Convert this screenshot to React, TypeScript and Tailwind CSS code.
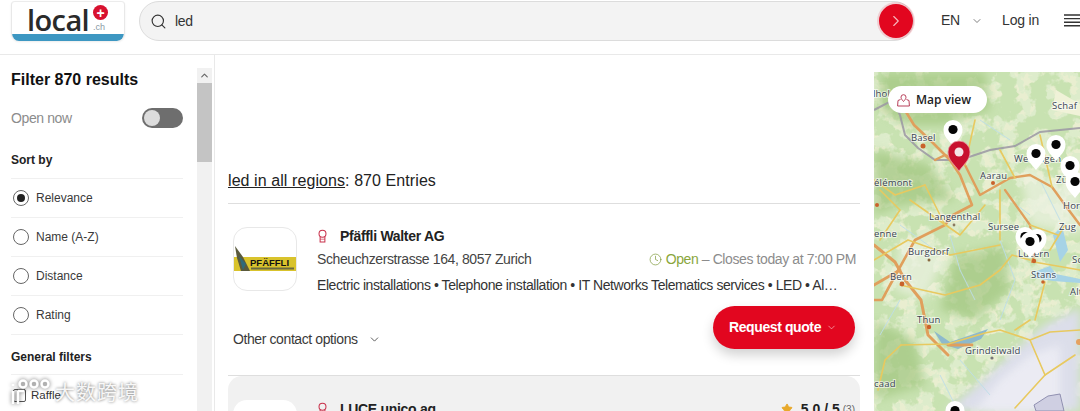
import { Search, ChevronRight, ChevronDown, ChevronUp, Clock, Star } from "lucide-react";

function Ribbon() {
  return (
    <svg width="11" height="14" viewBox="0 0 12 15" fill="none" stroke="#c8304a" strokeWidth="1.1" className="shrink-0">
      <circle cx="6" cy="5" r="3.8" />
      <path d="M3.4 8.2V14H8.6V8.2" />
      <path d="M3.4 11H8.6" strokeWidth="0.7" />
    </svg>
  );
}

function Radio({ label, checked }: { label: string; checked?: boolean }) {
  return (
    <div className="flex h-[39px] items-center gap-[7px] border-t border-[#f0f0f0] pl-[2px] text-[12px] text-[#3a3a3a]">
      <span className="flex h-[16px] w-[16px] items-center justify-center rounded-full border border-[#666]">
        {checked && <span className="h-[8px] w-[8px] rounded-full bg-[#222]" />}
      </span>
      {label}
    </div>
  );
}

function Pin({ x, y }: { x: number; y: number }) {
  return (
    <g transform={`translate(${x} ${y})`}>
      <path d="M0 15C-4 9.5 -9.5 6 -9.5 -1.5A9.5 9.5 0 1 1 9.5 -1.5C9.5 6 4 9.5 0 15Z" fill="#fff" />
      <circle cx="0" cy="-1.5" r="4.6" fill="#050505" />
    </g>
  );
}

const labels: [string, number, number][] = [
  ["lhol", 873, 97],
  ["Basel", 911, 141],
  ["Aarau", 980, 179],
  ["élémont", 874, 186],
  ["Langenthal", 929, 220],
  ["Sursee", 988, 230],
  ["Zug", 1059, 230],
  ["Horg", 1063, 209],
  ["Schaf", 1052, 109],
  ["Wettingen", 1014, 162],
  ["Zürich", 1056, 183],
  ["enne", 874, 237],
  ["Burgdorf", 908, 255],
  ["Luzern", 1018, 257],
  ["Stans", 1031, 278],
  ["Bern", 890, 280],
  ["Thun", 917, 323],
  ["Grindelwald", 965, 354],
  ["Alt", 1070, 295],
  ["Sch", 1072, 263],
  ["caad", 874, 387],
];

function MapArt() {
  return (
    <svg viewBox="874 72 206 339" className="h-[339px] w-[206px]" fontFamily="'Open Sans', sans-serif">
      <defs>
        <filter id="forest" x="0" y="0" width="100%" height="100%">
          <feTurbulence type="fractalNoise" baseFrequency="0.06" numOctaves="4" seed="7" />
          <feColorMatrix values="0 0 0 0 0.58  0 0 0 0 0.76  0 0 0 0 0.44  0 0 0 10 -4.3" />
        </filter>
        <filter id="fields" x="0" y="0" width="100%" height="100%">
          <feTurbulence type="fractalNoise" baseFrequency="0.13" numOctaves="3" seed="21" />
          <feColorMatrix values="0 0 0 0 0.72  0 0 0 0 0.84  0 0 0 0 0.6  0 0 0 9 -3.6" />
        </filter>
        <filter id="snow" x="0" y="0" width="100%" height="100%">
          <feTurbulence type="fractalNoise" baseFrequency="0.1" numOctaves="4" seed="4" />
          <feColorMatrix values="0 0 0 0 0.95  0 0 0 0 0.95  0 0 0 0 0.98  0 0 0 6 -2.9" />
        </filter>
        <filter id="soft">
          <feGaussianBlur stdDeviation="5" />
        </filter>
        <filter id="alpsBlur">
          <feGaussianBlur stdDeviation="4" />
        </filter>
        <filter id="softer">
          <feGaussianBlur stdDeviation="0.35" />
        </filter>
      </defs>
      <rect x="874" y="72" width="206" height="339" fill="#e9eed0" />
      <rect x="874" y="72" width="206" height="339" filter="url(#fields)" />
      <rect x="874" y="72" width="206" height="339" filter="url(#forest)" />
      <g filter="url(#soft)" fill="#9fc47c" opacity="0.65">
        <path d="M880 72H985L990 110L945 125L905 125L880 110Z" />
        <path d="M874 150L930 165L955 200L900 205L874 215Z" />
        <path d="M955 255L1005 245L1010 290L975 320L940 310Z" />
        <path d="M874 320L915 340L925 385L874 400Z" />
      </g>
      <g filter="url(#soft)" fill="#eef3e4" opacity="0.7">
        <path d="M1020 170L1080 190V235L1030 225Z" />
        <path d="M900 240L945 255L925 300L895 290Z" />
      </g>
      <g filter="url(#alpsBlur)">
        <path d="M985 378L1015 350L1045 325L1080 308V411H945L965 395Z" fill="#dcdeea" />
      </g>
      <g filter="url(#alpsBlur)" opacity="0.85">
        <path d="M1000 380L1030 355L1060 345L1060 411H975Z" fill="#eeeef5" />
      </g>
      <g filter="url(#softer)">
        <path d="M1034 272L1050 266L1056 274L1080 279V283L1053 281L1035 278Z" fill="#a6d3e6" />
        <path d="M1053 235L1062 226L1068 250L1060 262Z" fill="#a6d3e6" />
        <path d="M1056 90L1080 104V116L1052 110Z" fill="#f0f2d8" />
        <path d="M934 331L950 342L965 337L988 329L981 339L958 349L942 344Z" fill="#8db9cc" />
        <path d="M1034 405L1048 396L1060 394L1064 411H1036Z" fill="#cfcfe2" stroke="#8f8fb0" strokeWidth="1" />
        <path d="M874 110L893 100L900 115L905 135L918 148L935 160L960 160L990 150L1015 146L1040 132L1080 128" fill="none" stroke="#9b97a3" strokeWidth="2" opacity="0.85" />
        <g fill="none" stroke="#bcdde8" strokeWidth="0.9">
          <path d="M950 235L960 270L975 300M1000 240L1015 280L1000 320M960 360L990 395M1040 180L1060 220M900 300L880 335M1010 200L1030 215M900 225L935 250M980 120L1010 140M940 375L955 405" />
        </g>
        <g fill="none" stroke="#e09f5c" strokeLinecap="round" strokeLinejoin="round">
          <path d="M897 97L914 125L932 142L950 160L960 175L972 205L953 215L945 225L915 240L890 285L882 300L874 300" strokeWidth="2.6" />
          <path d="M935 160L945 155L965 165L980 195L1010 178L1030 175L1052 187L1065 205L1080 225" strokeWidth="2.4" />
          <path d="M1005 190L1030 225L1034 255L1032 262" strokeWidth="2.2" />
          <path d="M874 245L895 262L905 280L921 300L928 335L948 355" strokeWidth="3" />
          <path d="M874 285L900 270M948 345L972 345" strokeWidth="2.8" />
        </g>
        <g fill="none" stroke="#e8c95f" strokeLinecap="round" strokeLinejoin="round" strokeWidth="1.6">
          <path d="M900 285L945 295L980 285L1000 270L1012 255L1030 260" />
          <path d="M901 345L948 344L985 333L1000 330L1030 340L1045 375L1015 408" />
          <path d="M1045 375L1075 355M1030 340L1050 332L1080 330M1035 320L1045 282" />
          <path d="M874 260L908 240L950 255L1000 245M1030 320L1015 330" />
          <path d="M880 240L900 210L880 190M910 200L960 235L985 205M1065 225L1050 250" />
          <path d="M901 345L885 360L878 390M975 120L965 165M1000 150L1015 178M1040 135L1052 187M1000 190L1000 240M925 185L945 225" />
          <path d="M874 180L895 195L925 185M1030 225L1058 235M1034 262L1080 270" />
        </g>
      </g>
      <g fill="#c9622b">
        <circle cx="923" cy="146" r="2.5" />
        <circle cx="898" cy="102" r="2" />
        <circle cx="993" cy="183" r="2" />
        <circle cx="902" cy="284" r="2.4" />
        <circle cx="929" cy="327" r="2.2" />
        <circle cx="1034" cy="261" r="2.2" />
        <circle cx="1043" cy="282" r="1.8" />
        <circle cx="954" cy="225" r="1.4" fill="#8a7a60" />
        <circle cx="929" cy="260" r="1.5" fill="#8a6a40" />
        <circle cx="992" cy="358" r="1.6" fill="#777" />
        <circle cx="1079" cy="342" r="3" fill="#e5a15f" />
        <circle cx="877" cy="205" r="2" />
      </g>
      {labels.map(([t, x, y]) => (
        <text key={t} x={x} y={y} fontSize="9.5" fill="#3a4452" stroke="#ffffff" strokeOpacity="0.6" strokeWidth="2" paintOrder="stroke" letterSpacing="0.2">
          {t}
        </text>
      ))}
      <Pin x={1056} y={146} />
      <Pin x={1036} y={155} />
      <Pin x={1070} y={167} />
      <Pin x={1075} y={183} />
      <Pin x={953} y={131} />
      <Pin x={1025} y={238} />
      <Pin x={1037} y={240} />
      <Pin x={1030} y={243} />
      <Pin x={955} y={412} />
      <g transform="translate(959 153)">
        <path d="M0 18C-5 11 -11 7 -11 -1A11 11 0 1 1 11 -1C11 7 5 11 0 18Z" fill="#c8102e" stroke="#e8a0a8" strokeWidth="0.8" />
        <circle cx="0" cy="-1" r="4.5" fill="#f4e4e6" />
      </g>
    </svg>
  );
}

export default function App() {
  return (
    <div className="relative flex h-[411px] w-[1080px] flex-col overflow-hidden bg-white font-['Liberation_Sans',Arial,sans-serif] text-[#222]">
      <header className="flex h-[55px] shrink-0 border-b border-[#e9e9e9] pl-[11px]">
        <div className="relative mt-[1px] h-[40px] w-[114px] overflow-hidden rounded-t-[4px] rounded-b-[8px] border border-x-[#e8e8e8] border-t-[#ececec] border-b-0 bg-white shadow-[0_1px_2px_rgba(0,0,0,0.08)]">
          <span className="absolute left-[15px] top-[-2px] whitespace-nowrap font-['Open_Sans',sans-serif] text-[29px] font-semibold leading-[40px] tracking-[-0.6px] text-[#2a2a2a]">local</span>
          <span className="absolute left-[81px] top-[19px] whitespace-nowrap text-[9px] leading-[12px] text-[#8a9aa5]">.ch</span>
          <span className="absolute left-[81px] top-[3px] flex h-[15px] w-[15px] items-center justify-center rounded-full bg-[#d8112f] text-[14px] font-bold leading-none text-white">+</span>
          <div className="absolute bottom-0 left-0 h-[7px] w-full rounded-br-[8px] bg-[#3d97c2]" />
        </div>
        <div className="ml-[14px] mt-[1px] flex h-[40px] w-[776px] items-center rounded-full border border-[#dcdcdc] bg-[#f3f3f3] pl-[10px]">
          <Search size={17} strokeWidth={1.6} className="text-[#333]" />
          <span className="ml-[8px] text-[14px] tracking-[-0.3px] text-[#333]">led</span>
          <div className="ml-auto flex h-[34px] w-[34px] items-center justify-center rounded-full bg-[#e2061f] shadow-[0_0_0_2px_rgba(226,6,31,0.15)]">
            <ChevronRight size={18} strokeWidth={1.5} className="text-[#f6b7bd]" />
          </div>
        </div>
        <div className="ml-[27px] flex h-[41px] shrink-0 items-center whitespace-nowrap text-[14px] tracking-[-0.2px] text-[#333]">
          <span>EN</span>
          <ChevronDown size={12} strokeWidth={1.5} className="ml-[11px] text-[#555]" />
          <span className="ml-[19px]">Log in</span>
          <svg width="16" height="13" viewBox="0 0 16 13" stroke="#333" strokeWidth="1.4" className="ml-[25px]">
            <path d="M0 1H16M0 4.6H16M0 8.2H16M0 11.8H16" />
          </svg>
        </div>
      </header>

      <div className="flex min-h-0 flex-1">
        <aside className="flex w-[215px] shrink-0 border-r border-[#e9e9e9]">
          <div className="w-[197px] shrink-0 overflow-hidden pl-[11px] pr-[14px]">
            <div className="pt-[16px] text-[16px] font-bold leading-[18px] text-[#111]">Filter 870 results</div>
            <div className="mt-[19px] flex h-[20px] items-center justify-between text-[14px] tracking-[-0.4px] text-[#8c8c8c]">
              <span>Open now</span>
              <span className="flex h-[20px] w-[41px] items-center rounded-full bg-[#6e6e6e] pl-[2px]">
                <span className="h-[16px] w-[16px] rounded-full bg-[#dcdcdc]" />
              </span>
            </div>
            <div className="mt-[25px] pb-[11px] text-[12px] font-bold leading-[14px] text-[#222]">Sort by</div>
            <Radio label="Relevance" checked />
            <Radio label="Name (A-Z)" />
            <Radio label="Distance" />
            <Radio label="Rating" />
            <div className="h-[40px] border-t border-[#f0f0f0] pt-[15px] text-[12px] font-bold leading-[14px] text-[#222]">General filters</div>
            <div className="flex h-[39px] items-center gap-[5px] border-t border-[#f0f0f0] pt-[3px] text-[11.5px] text-[#333]">
              <span className="ml-[2px] h-[13px] w-[13px] rounded-[2px] border border-[#555]" />
              Raffle
            </div>
          </div>
          <div className="mt-[13px] flex w-[15px] shrink-0 flex-col bg-[#f1f1f1]">
            <div className="flex h-[15px] items-center justify-center">
              <ChevronUp size={11} strokeWidth={2.5} className="text-[#666]" />
            </div>
            <div className="h-[79px] bg-[#c4c4c4]" />
          </div>
        </aside>

        <main className="min-w-0 flex-1 pl-[13px] pr-[14px]">
          <h1 className="mt-[116px] border-b border-[#dedede] pb-[12px] text-[16px] font-normal leading-[20px] tracking-[0.08px] text-[#222]">
            <span className="underline">led in all regions</span>: 870 Entries
          </h1>
          <article className="h-[172px] border-b border-[#dedede] px-[5px]">
            <div className="flex pt-[23px]">
              <div className="h-[64px] w-[64px] shrink-0 overflow-hidden rounded-[14px] border border-[#e8e8e8] bg-white">
                <svg width="62" height="62" viewBox="0 0 62 62">
                  <rect x="0" y="29" width="62" height="14" fill="#d9c32c" />
                  <path d="M1 18L9 29L16 43H7L3 30Z" fill="#5a5a3c" />
                  <path d="M5 28L12 36L9 42Z" fill="#2f6a7a" />
                  <text x="16" y="38" fontSize="9.5" fontWeight="900" fill="#111" fontFamily="'Liberation Sans', sans-serif">PFÄFFLI</text>
                  <rect x="17" y="39.5" width="43" height="2" fill="#6a6a40" />
                </svg>
              </div>
              <div className="ml-[20px] min-w-0 flex-1 text-[14px] tracking-[-0.4px]">
                <div className="flex h-[18px] items-center gap-[12px] font-bold tracking-[-0.3px] text-[#222]">
                  <Ribbon />
                  <span>Pfäffli Walter AG</span>
                </div>
                <div className="mt-[4px] flex h-[20px] items-center justify-between text-[#444]">
                  <span>Scheuchzerstrasse 164, 8057 Zurich</span>
                  <span className="-mr-px flex items-center text-[#8c8c8c]">
                    <Clock size={13} strokeWidth={1.3} className="mr-[4px] text-[#7f9a3a]" />
                    <span className="text-[#8aa63c]">Open</span>&nbsp;– Closes today at 7:00 PM
                  </span>
                </div>
                <div className="mt-[6px] whitespace-nowrap leading-[20px] tracking-[-0.43px] text-[#333]">
                  Electric installations • Telephone installation • IT Networks Telematics services • LED • Al…
                </div>
              </div>
            </div>
            <div className="mt-[11px] flex items-start justify-between">
              <div className="mt-[23px] flex items-center text-[14px] leading-[20px] tracking-[-0.4px] text-[#3a3a3a]">
                Other contact options
                <ChevronDown size={13} strokeWidth={1.5} className="ml-[10px]" />
              </div>
              <div className="flex h-[43px] w-[142px] items-center justify-center rounded-full bg-[#e2061f] pr-[2px] text-[14px] font-bold tracking-[-0.4px] text-white shadow-[0_6px_12px_rgba(0,0,0,0.18)]">
                Request quote
                <ChevronDown size={11} strokeWidth={1.5} className="ml-[5px] text-[#f8c0c6]" />
              </div>
            </div>
          </article>
          <article className="h-[60px] rounded-t-[14px] bg-[#f1f1f1] px-[5px]">
            <div className="flex pt-[24px]">
              <div className="h-[40px] w-[64px] shrink-0 rounded-t-[14px] bg-white" />
              <div className="ml-[20px] flex flex-1 items-start justify-between">
                <div className="flex h-[18px] items-center gap-[12px] text-[14px] font-bold tracking-[-0.3px] text-[#222]">
                  <Ribbon />
                  <span>LUCE unico ag</span>
                </div>
                <div className="flex h-[18px] items-center text-[14px] font-bold text-[#222]">
                  <Star size={12} className="mr-[8px] fill-[#e8a92b] text-[#e8a92b]" />
                  5.0 / 5
                  <span className="ml-[3px] text-[10px] font-normal text-[#666]">(3)</span>
                </div>
              </div>
            </div>
          </article>
        </main>

        <div className="relative w-[206px] shrink-0 pt-[17px]">
          <MapArt />
          <div className="absolute left-[14px] top-[31px] flex h-[27px] w-[99px] items-center rounded-full bg-white pl-[9px] font-['Open_Sans',sans-serif] text-[12px] font-semibold text-[#222]">
            <svg width="13" height="14" viewBox="0 0 13 14" fill="none" stroke="#b8405a" strokeWidth="1" className="mr-[6px]">
              <path d="M6.5 8.5C5 6.8 4 5.6 4 4.2A2.5 2.5 0 0 1 9 4.2C9 5.6 8 6.8 6.5 8.5Z" />
              <path d="M3.5 6.5L1 7.5L0.6 13H12.4L12 7.5L9.5 6.5" />
            </svg>
            Map view
          </div>
        </div>
      </div>

      <div className="absolute left-[10px] top-[379px] flex items-center gap-[4px] font-['Noto_Sans_CJK_SC',sans-serif] text-[20px] leading-[26px] tracking-[1px] text-white/90 [text-shadow:0_0_3px_rgba(0,0,0,0.6)]">
        <svg width="41" height="26" viewBox="0 0 41 26" fill="none" stroke="#ffffff" strokeWidth="2.4" className="drop-shadow-[0_0_2px_rgba(0,0,0,0.6)]">
          <path d="M3 12V25M3 5V7M8 12H14M8 12V25" />
          <circle cx="13" cy="5" r="3.5" />
          <circle cx="24" cy="5" r="3.5" />
          <circle cx="35" cy="5" r="3.5" />
        </svg>
        大数跨境
      </div>
    </div>
  );
}
